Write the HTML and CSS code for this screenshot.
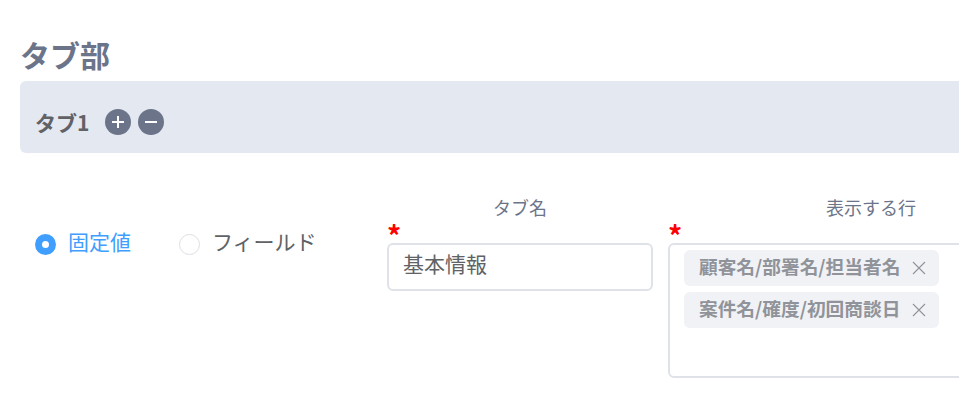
FILE: index.html
```html
<!DOCTYPE html>
<html lang="ja">
<head>
    <meta charset="UTF-8">
    <title>タブ部</title>
    <link rel="stylesheet" href="styles.css">
</head>
<body>
    <div class="page">
        <h2 class="section-title">タブ部</h2>
        <div class="tab-bar">
            <span class="tab-name">タブ1</span>
            <button class="round-btn">
                <svg width="14" height="14" viewBox="0 0 14 14"><path d="M7 1v12M1 7h12" stroke="#fff" stroke-width="2" fill="none"/></svg>
            </button>
            <button class="round-btn">
                <svg width="14" height="14" viewBox="0 0 14 14"><path d="M1 7h12" stroke="#fff" stroke-width="2" fill="none"/></svg>
            </button>
        </div>

        <div class="form-row">
            <div class="radio-group">
                <label class="radio checked"><span class="radio-mark"></span><span class="radio-text">固定値</span></label>
                <label class="radio"><span class="radio-mark"></span><span class="radio-text">フィールド</span></label>
            </div>
            <div class="field field-name">
                <div class="field-label">タブ名</div>
                <div class="required">*</div>
                <div class="text-input">基本情報</div>
            </div>
            <div class="field field-rows">
                <div class="field-label">表示する行</div>
                <div class="required">*</div>
                <div class="tag-box">
                    <div class="tag">
                        <span>顧客名/部署名/担当者名</span>
                        <svg width="14" height="14" viewBox="0 0 14 14"><path d="M1 1l12 12M13 1L1 13" stroke="#909399" stroke-width="1.1" fill="none"/></svg>
                    </div>
                    <div class="tag">
                        <span>案件名/確度/初回商談日</span>
                        <svg width="14" height="14" viewBox="0 0 14 14"><path d="M1 1l12 12M13 1L1 13" stroke="#909399" stroke-width="1.1" fill="none"/></svg>
                    </div>
                </div>
            </div>
        </div>
    </div>
</body>
</html>
```

FILE: styles.css
```css
html, body {
    margin: 0;
    padding: 0;
    height: 416px;
    overflow: hidden;
    background-color: #ffffff;
    font-family: "Noto Sans CJK JP", "Liberation Sans", sans-serif;
}

.page {
    width: 1100px;
    padding: 38px 0 0 20px;
    box-sizing: border-box;
}

.section-title {
    margin: 0;
    height: 43px;
    line-height: 33px;
    font-size: 30px;
    font-weight: bold;
    color: #6b7489;
}

.tab-bar {
    display: flex;
    align-items: center;
    height: 72px;
    padding: 10px 15px 0;
    box-sizing: border-box;
    background-color: #e4e8f1;
    border-radius: 6px;
}

.tab-name {
    margin-right: 16px;
    font-size: 21px;
    font-weight: bold;
    color: #606266;
}

.round-btn {
    display: flex;
    align-items: center;
    justify-content: center;
    width: 26px;
    height: 26px;
    margin-right: 7px;
    padding: 0;
    border: none;
    border-radius: 50%;
    background-color: #6b7489;
}

.form-row {
    display: flex;
    align-items: flex-start;
    margin-top: 42px;
    padding-left: 15px;
}

.radio-group {
    display: flex;
    width: 352px;
    margin-top: 33px;
}

.radio {
    display: flex;
    align-items: center;
    height: 32px;
    margin-right: 48px;
    font-size: 21px;
    color: #606266;
}

.radio.checked {
    color: #409eff;
}

.radio-text {
    margin-top: -6px;
    margin-left: -1px;
}

.radio-mark {
    width: 21px;
    height: 21px;
    margin-right: 13px;
    box-sizing: border-box;
    border: 1.5px solid #dcdfe6;
    border-radius: 50%;
    background-color: #ffffff;
}

.radio.checked .radio-mark {
    border: 7.5px solid #409eff;
}

.field-name {
    width: 266px;
    margin-right: 15px;
}

.field-rows {
    width: 406px;
}

.field-label {
    height: 24px;
    line-height: 24px;
    font-size: 18px;
    text-align: center;
    color: #6b7489;
}

.required {
    height: 24px;
    line-height: 33px;
    font-size: 28px;
    font-weight: bold;
    color: #ff0000;
}

.text-input {
    height: 48px;
    padding: 0 14px;
    box-sizing: border-box;
    line-height: 37px;
    font-size: 21px;
    color: #606266;
    background-color: #ffffff;
    border: 2px solid #dfe2e9;
    border-radius: 6px;
}

.tag-box {
    height: 135px;
    padding: 5px 14px;
    box-sizing: border-box;
    background-color: #ffffff;
    border: 2px solid #dfe2e9;
    border-radius: 6px;
}

.tag {
    display: flex;
    align-items: center;
    justify-content: space-between;
    width: 255px;
    height: 36px;
    margin-bottom: 6px;
    padding: 0 13px 0 15px;
    box-sizing: border-box;
    background-color: #f0f2f5;
    border-radius: 6px;
    font-size: 18.7px;
    font-weight: bold;
    color: #909399;
}

.tag span {
    line-height: 30px;
    margin-top: -5px;
}

.tag svg {
    flex: none;
}
```
